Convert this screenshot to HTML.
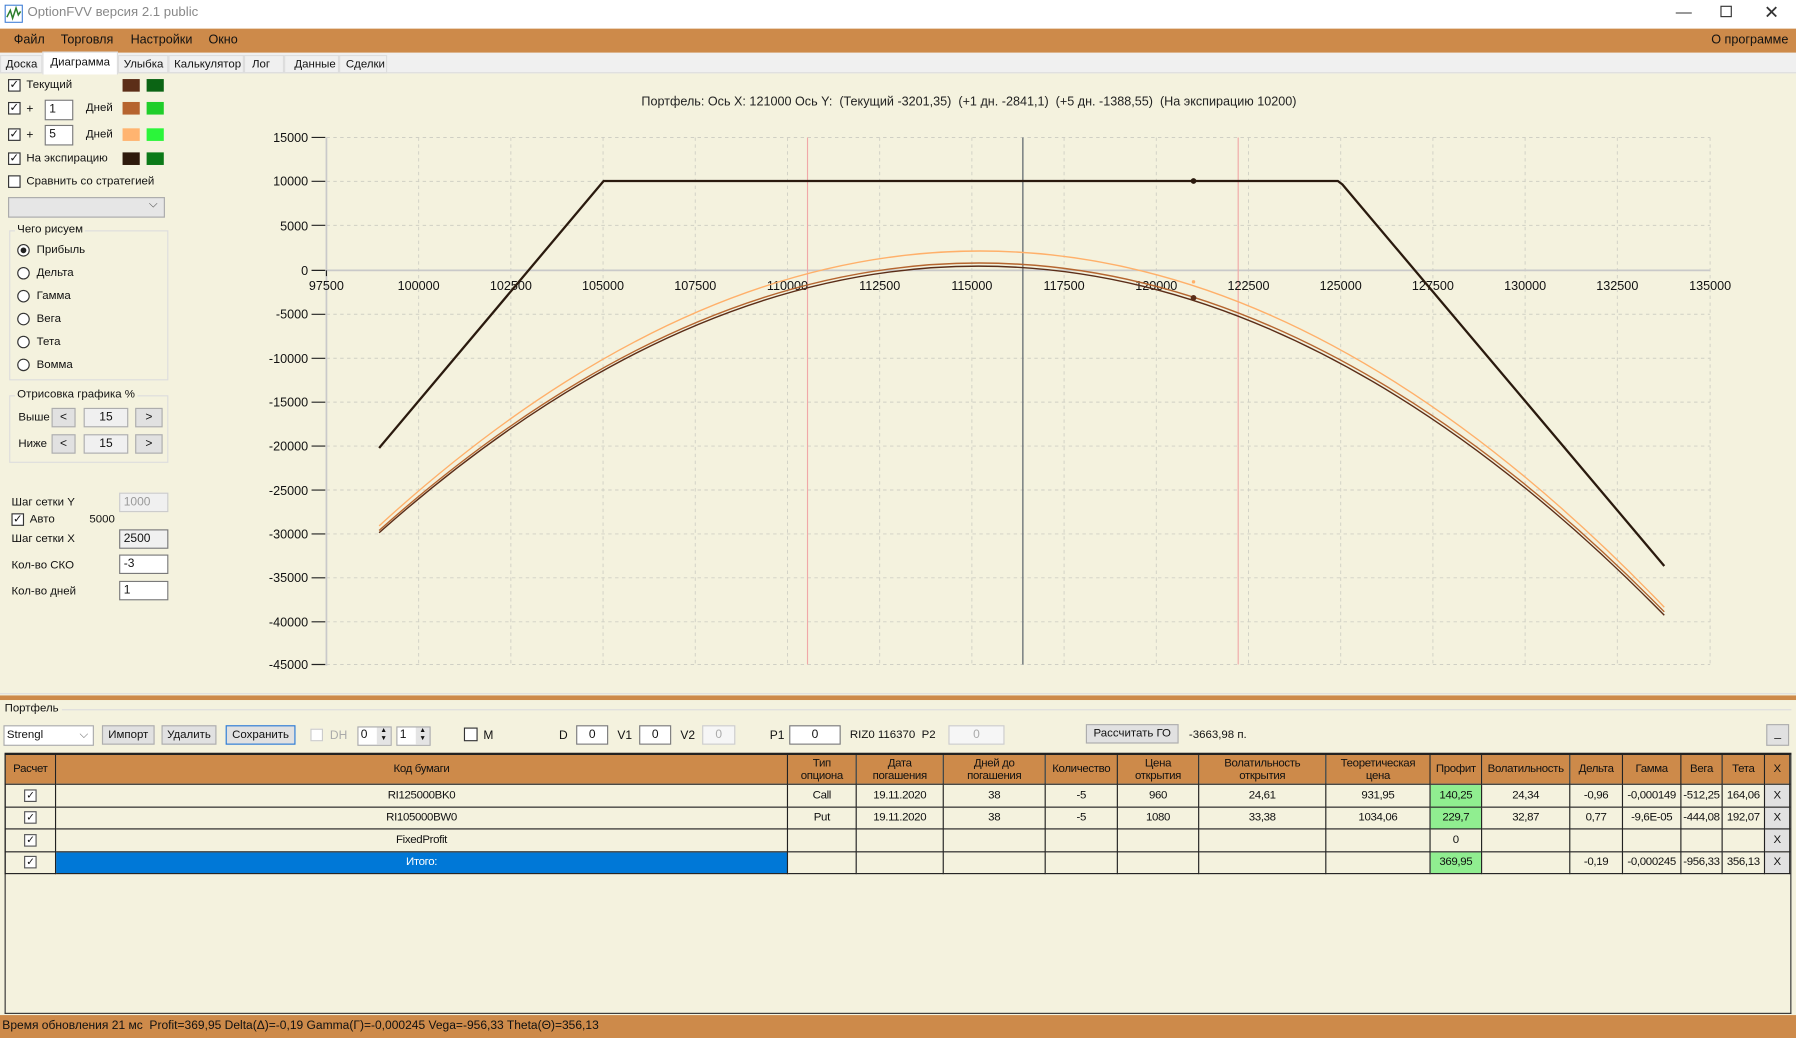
<!DOCTYPE html>
<html><head><meta charset="utf-8"><style>
*{margin:0;padding:0;box-sizing:border-box}
html,body{width:1796px;height:1038px;overflow:hidden;background:#f4f2de}
#w{position:absolute;left:0;top:0;width:1568px;height:906px;transform-origin:0 0;transform:scale(1.14541,1.1457);font-family:"Liberation Sans","DejaVu Sans",sans-serif;font-size:10.5px;color:#111;background:#f4f2de}
.a{position:absolute;white-space:nowrap}
.cb{position:absolute;width:11px;height:11px;border:1px solid #333;background:#fff;font-size:10px;line-height:9px;text-align:center}
.in{position:absolute;background:#fff;border:1px solid #7a7a7a;height:17px;line-height:15px;padding-left:3px}
.rd{position:absolute;width:11px;height:11px;border:1px solid #333;border-radius:50%;background:#fff}
.btn{position:absolute;background:#e1e1e1;border:1px solid #adadad;text-align:center;line-height:15px;height:17px}
.sw{position:absolute;width:15px;height:11px}
table{border-collapse:collapse;table-layout:fixed;position:absolute;left:4px;top:658px;font-size:10px;letter-spacing:-.3px}
td,th{border:1px solid #222;text-align:center;overflow:hidden;white-space:nowrap;height:19.5px;font-weight:normal}
th{background:#cd8a4a;height:26px;line-height:11px}
.ck{display:inline-block;width:11px;height:11px;border:1px solid #555;background:#fff;font-size:9px;line-height:9px;vertical-align:middle}
</style></head><body><div id="w">
<div class="a" style="left:0;top:0;width:1568px;height:25px;background:#fff"></div>
<svg class="a" style="left:4px;top:4px" width="16" height="16"><rect x="0.5" y="0.5" width="15" height="15" fill="#fff" stroke="#3a7bd5"/><path d="M2 11 L5 5 L7 12 L10 3 L12 9 L14 6" stroke="#2b7d2b" fill="none" stroke-width="1.3"/></svg>
<div class="a" style="left:24px;top:5px;color:#888;font-size:11.5px">OptionFVV версия 2.1 public</div>
<div class="a" style="left:1463px;top:2px;font-size:14px;color:#333">—</div>
<div class="a" style="left:1502px;top:5px;width:10px;height:10px;border:1px solid #333"></div>
<div class="a" style="left:1540px;top:1px;font-size:16px;color:#333">✕</div>
<div class="a" style="left:0;top:25px;width:1568px;height:21px;background:#cd8a4a"></div>
<div class="a" style="left:12px;top:29px;font-size:11px">Файл</div>
<div class="a" style="left:53px;top:29px;font-size:11px">Торговля</div>
<div class="a" style="left:114px;top:29px;font-size:11px">Настройки</div>
<div class="a" style="left:182px;top:29px;font-size:11px">Окно</div>
<div class="a" style="left:1494px;top:29px;font-size:11px">О программе</div>
<div class="a" style="left:0;top:46px;width:1568px;height:18px;background:#f0f0f0;border-bottom:1px solid #ddd"></div>
<div class="a" style="left:0;top:48px;width:37px;height:16px;border:1px solid #ddd;padding:2px 0 0 4px;font-size:10px">Доска</div>
<div class="a" style="left:37px;top:45px;width:66px;height:20px;background:#fff;border:1px solid #ddd;border-bottom:none;padding:3px 0 0 6px;font-size:10px">Диаграмма</div>
<div class="a" style="left:103px;top:48px;width:44px;height:16px;border:1px solid #ddd;padding:2px 0 0 4px;font-size:10px">Улыбка</div>
<div class="a" style="left:147px;top:48px;width:66px;height:16px;border:1px solid #ddd;padding:2px 0 0 4px;font-size:10px">Калькулятор</div>
<div class="a" style="left:213px;top:48px;width:35px;height:16px;border:1px solid #ddd;padding:2px 0 0 6px;font-size:10px">Лог</div>
<div class="a" style="left:248px;top:48px;width:48px;height:16px;border:1px solid #ddd;padding:2px 0 0 8px;font-size:10px">Данные</div>
<div class="a" style="left:296px;top:48px;width:42px;height:16px;border:1px solid #ddd;padding:2px 0 0 5px;font-size:10px">Сделки</div>
<div class="cb" style="left:7px;top:69px">✓</div><div class="a" style="left:23px;top:69px;font-size:10px">Текущий</div>
<div class="sw" style="left:107px;top:69px;background:#5c2e18"></div><div class="sw" style="left:128px;top:69px;background:#0b6414"></div>
<div class="cb" style="left:7px;top:89px">✓</div><div class="a" style="left:23px;top:89px">+</div>
<div class="in" style="left:39px;top:87px;width:25px;height:18px">1</div><div class="a" style="left:75px;top:89px;font-size:10px">Дней</div>
<div class="sw" style="left:107px;top:89px;background:#b6642f"></div><div class="sw" style="left:128px;top:89px;background:#1fce2a"></div>
<div class="cb" style="left:7px;top:112px">✓</div><div class="a" style="left:23px;top:112px">+</div>
<div class="in" style="left:39px;top:109px;width:25px;height:18px">5</div><div class="a" style="left:75px;top:112px;font-size:10px">Дней</div>
<div class="sw" style="left:107px;top:112px;background:#ffb470"></div><div class="sw" style="left:128px;top:112px;background:#2bf53a"></div>
<div class="cb" style="left:7px;top:133px">✓</div><div class="a" style="left:23px;top:133px;font-size:10px">На экспирацию</div>
<div class="sw" style="left:107px;top:133px;background:#2e1a0c"></div><div class="sw" style="left:128px;top:133px;background:#0b7a18"></div>
<div class="cb" style="left:7px;top:153px"></div><div class="a" style="left:23px;top:153px;font-size:10px">Сравнить со стратегией</div>
<div class="a" style="left:7px;top:172px;width:137px;height:18px;background:#e6e6e6;border:1px solid #aaa"></div>
<div class="a" style="left:130px;top:173px;font-size:10px;color:#555">⌵</div>
<div class="a" style="left:8px;top:201px;width:139px;height:131px;border:1px solid #ddd"></div>
<div class="a" style="left:13px;top:195px;background:#f4f2de;padding:0 2px;font-size:10px">Чего рисуем</div>
<div class="rd" style="left:15px;top:213px"><div style="width:5px;height:5px;border-radius:50%;background:#222;margin:2px"></div></div><div class="a" style="left:32px;top:213px;font-size:10px">Прибыль</div>
<div class="rd" style="left:15px;top:233px"></div><div class="a" style="left:32px;top:233px;font-size:10px">Дельта</div>
<div class="rd" style="left:15px;top:253px"></div><div class="a" style="left:32px;top:253px;font-size:10px">Гамма</div>
<div class="rd" style="left:15px;top:273px"></div><div class="a" style="left:32px;top:273px;font-size:10px">Вега</div>
<div class="rd" style="left:15px;top:293px"></div><div class="a" style="left:32px;top:293px;font-size:10px">Тета</div>
<div class="rd" style="left:15px;top:313px"></div><div class="a" style="left:32px;top:313px;font-size:10px">Вомма</div>
<div class="a" style="left:8px;top:345px;width:139px;height:59px;border:1px solid #ddd"></div>
<div class="a" style="left:13px;top:339px;background:#f4f2de;padding:0 2px;font-size:10px">Отрисовка графика %</div>
<div class="a" style="left:16px;top:359px;font-size:10px">Выше</div>
<div class="btn" style="left:45px;top:356px;width:21px">&lt;</div><div class="btn" style="left:73px;top:356px;width:39px;background:#f0f0f0">15</div><div class="btn" style="left:118px;top:356px;width:24px">&gt;</div>
<div class="a" style="left:16px;top:382px;font-size:10px">Ниже</div>
<div class="btn" style="left:45px;top:379px;width:21px">&lt;</div><div class="btn" style="left:73px;top:379px;width:39px;background:#f0f0f0">15</div><div class="btn" style="left:118px;top:379px;width:24px">&gt;</div>
<div class="a" style="left:10px;top:433px;font-size:10px">Шаг сетки Y</div><div class="in" style="left:104px;top:430px;width:43px;background:#f0f0f0;color:#999;border-color:#ccc">1000</div>
<div class="cb" style="left:10px;top:448px">✓</div><div class="a" style="left:26px;top:448px;font-size:10px">Авто</div><div class="a" style="left:78px;top:448px;font-size:10px">5000</div>
<div class="a" style="left:10px;top:465px;font-size:10px">Шаг сетки X</div><div class="in" style="left:104px;top:462px;width:43px;background:#f0f0f0">2500</div>
<div class="a" style="left:10px;top:488px;font-size:10px">Кол-во СКО</div><div class="in" style="left:104px;top:484px;width:43px">-3</div>
<div class="a" style="left:10px;top:511px;font-size:10px">Кол-во дней</div><div class="in" style="left:104px;top:507px;width:43px">1</div>
<div class="a" style="left:560px;top:83px;font-size:11px;color:#222">Портфель: Ось X: 121000 Ось Y:&nbsp; (Текущий -3201,35)&nbsp; (+1 дн. -2841,1)&nbsp; (+5 дн. -1388,55)&nbsp; (На экспирацию 10200)</div>
<svg class="a" style="left:0;top:0" width="1568" height="610" font-family="Liberation Sans, sans-serif" font-size="11">
<g stroke="#cfcfc4" stroke-dasharray="3,3" stroke-width="0.8">
<path d="M285 120H1493M285 158.3H1493M285 196.7H1493M285 274.3H1493M285 312.7H1493M285 351H1493M285 389.3H1493M285 427.7H1493M285 466H1493M285 504.3H1493M285 542.7H1493M285 580H1493"/>
<path d="M365.5 120V580M446 120V580M526.5 120V580M607 120V580M687.5 120V580M768 120V580M848.5 120V580M929 120V580M1009.5 120V580M1090 120V580M1170.5 120V580M1251 120V580M1331.5 120V580M1412 120V580M1493 120V580"/>
</g>
<path d="M285 236H1493" stroke="#c9c9c9" stroke-width="1.5"/>
<path d="M285 120V581" stroke="#c9c9c9" stroke-width="1.5"/>
<path d="M705 120V580M1081 120V580" stroke="#f0a8a8" stroke-width="1"/>
<path d="M893 120V580" stroke="#6c7378" stroke-width="1.2"/>
<g stroke="#222" stroke-width="1"><path d="M272 120H284M272 158.3H284M272 196.7H284M272 236H284M272 274.3H284M272 312.7H284M272 351H284M272 389.3H284M272 427.7H284M272 466H284M272 504.3H284M272 542.7H284M272 580H284M285 236V241"/></g>
<g text-anchor="end" fill="#111"><text x="269" y="124">15000</text><text x="269" y="162">10000</text><text x="269" y="201">5000</text><text x="269" y="240">0</text><text x="269" y="278">-5000</text><text x="269" y="317">-10000</text><text x="269" y="355">-15000</text><text x="269" y="393">-20000</text><text x="269" y="432">-25000</text><text x="269" y="470">-30000</text><text x="269" y="508">-35000</text><text x="269" y="547">-40000</text><text x="269" y="584">-45000</text></g>
<g text-anchor="middle" fill="#111"><text x="285" y="253">97500</text><text x="365.5" y="253">100000</text><text x="446" y="253">102500</text><text x="526.5" y="253">105000</text><text x="607" y="253">107500</text><text x="687.5" y="253">110000</text><text x="768" y="253">112500</text><text x="848.5" y="253">115000</text><text x="929" y="253">117500</text><text x="1009.5" y="253">120000</text><text x="1090" y="253">122500</text><text x="1170.5" y="253">125000</text><text x="1251" y="253">127500</text><text x="1331.5" y="253">130000</text><text x="1412" y="253">132500</text><text x="1493" y="253">135000</text></g>
<path d="M331 459 Q892 -54 1453 530" stroke="#ffb06a" fill="none" stroke-width="1.2"/>
<path d="M331 463 Q892 -37 1453 534" stroke="#b5652f" fill="none" stroke-width="1.2"/>
<path d="M331 465 Q892 -34 1453 537" stroke="#5a2d18" fill="none" stroke-width="1.2"/>
<path d="M331 391 L527 158 L1168 158 L1172 161 L1453 494" stroke="#2a1a0e" fill="none" stroke-width="2"/>
<circle cx="1042" cy="158" r="2.5" fill="#2a1a0e"/><circle cx="1042" cy="260" r="2.5" fill="#5a2d18"/><circle cx="1042" cy="246" r="1.5" fill="#ffb06a"/>
</svg>
<div class="a" style="left:0;top:607px;width:1568px;height:4px;background:#cd8a4a"></div>
<div class="a" style="left:0;top:605px;width:1568px;height:1px;background:#ddd"></div>
<div class="a" style="left:4px;top:613px;font-size:10px">Портфель</div>
<div class="a" style="left:54px;top:619px;width:1510px;height:1px;background:#ddd"></div>
<div class="a" style="left:3px;top:633px;width:79px;height:18px;background:#fff;border:1px solid #aaa;padding:2px 0 0 2px;font-size:10px">Strengl<span style="position:absolute;right:4px;color:#777">⌵</span></div>
<div class="btn" style="left:89px;top:633px;width:46px;font-size:10px">Импорт</div>
<div class="btn" style="left:141px;top:633px;width:48px;font-size:10px">Удалить</div>
<div class="btn" style="left:197px;top:633px;width:61px;border:1.5px solid #2a7ad5;font-size:10px">Сохранить</div>
<div class="a" style="left:271px;top:636px;width:11px;height:11px;border:1px solid #ccc;background:#fff"></div><div class="a" style="left:288px;top:636px;color:#aaa">DH</div>
<div class="a" style="left:312px;top:634px;width:30px;height:17px;background:#fff;border:1px solid #aaa;padding-left:2px">0</div><div class="a" style="left:329px;top:635px;width:12px;height:15px;background:#e4e4e4;font-size:6px;line-height:7px;text-align:center">▲<br>▼</div>
<div class="a" style="left:346px;top:634px;width:30px;height:17px;background:#fff;border:1px solid #aaa;padding-left:2px">1</div><div class="a" style="left:363px;top:635px;width:12px;height:15px;background:#e4e4e4;font-size:6px;line-height:7px;text-align:center">▲<br>▼</div>
<div class="a" style="left:405px;top:635px;width:12px;height:12px;border:1px solid #333;background:#fff"></div><div class="a" style="left:422px;top:636px">M</div>
<div class="a" style="left:488px;top:636px">D</div><div class="in" style="left:503px;top:633px;width:28px;text-align:center;padding:0">0</div>
<div class="a" style="left:539px;top:636px">V1</div><div class="in" style="left:558px;top:633px;width:28px;text-align:center;padding:0">0</div>
<div class="a" style="left:594px;top:636px">V2</div><div class="in" style="left:613px;top:633px;width:29px;text-align:center;padding:0;color:#aaa;border-color:#ccc;background:#f6f6f6">0</div>
<div class="a" style="left:672px;top:636px">P1</div><div class="in" style="left:689px;top:633px;width:45px;text-align:center;padding:0">0</div>
<div class="a" style="left:742px;top:636px;font-size:10px">RIZ0 116370&nbsp; P2</div><div class="in" style="left:828px;top:633px;width:49px;text-align:center;padding:0;color:#aaa;border-color:#ccc;background:#f6f6f6">0</div>
<div class="btn" style="left:948px;top:632px;width:81px;font-size:10px">Рассчитать ГО</div>
<div class="a" style="left:1038px;top:636px;font-size:10px">-3663,98 п.</div>
<div class="btn" style="left:1542px;top:632px;width:20px;height:19px">_</div>
<div class="a" style="left:4px;top:657px;width:1560px;height:228px;border:1px solid #333;border-top:2px solid #222"></div>
<table>
<colgroup><col style="width:44px"><col style="width:639px"><col style="width:60px"><col style="width:76px"><col style="width:89px"><col style="width:63px"><col style="width:71px"><col style="width:111px"><col style="width:91px"><col style="width:45px"><col style="width:77px"><col style="width:46px"><col style="width:51px"><col style="width:36px"><col style="width:37px"><col style="width:22px"></colgroup>
<tr><th>Расчет</th><th>Код бумаги</th><th>Тип<br>опциона</th><th>Дата<br>погашения</th><th>Дней до<br>погашения</th><th>Количество</th><th>Цена<br>открытия</th><th>Волатильность<br>открытия</th><th>Теоретическая<br>цена</th><th>Профит</th><th>Волатильность</th><th>Дельта</th><th>Гамма</th><th>Вега</th><th>Тета</th><th>X</th></tr>
<tr><td><span class="ck">✓</span></td><td>RI125000BK0</td><td>Call</td><td>19.11.2020</td><td>38</td><td>-5</td><td>960</td><td>24,61</td><td>931,95</td><td style="background:#90ee90">140,25</td><td>24,34</td><td>-0,96</td><td>-0,000149</td><td>-512,25</td><td>164,06</td><td style="background:#e1e1e1">X</td></tr>
<tr><td><span class="ck">✓</span></td><td>RI105000BW0</td><td>Put</td><td>19.11.2020</td><td>38</td><td>-5</td><td>1080</td><td>33,38</td><td>1034,06</td><td style="background:#90ee90">229,7</td><td>32,87</td><td>0,77</td><td>-9,6E-05</td><td>-444,08</td><td>192,07</td><td style="background:#e1e1e1">X</td></tr>
<tr><td><span class="ck">✓</span></td><td>FixedProfit</td><td></td><td></td><td></td><td></td><td></td><td></td><td></td><td>0</td><td></td><td></td><td></td><td></td><td></td><td style="background:#e1e1e1">X</td></tr>
<tr><td><span class="ck">✓</span></td><td style="background:#0078d7;color:#fff">Итого:</td><td></td><td></td><td></td><td></td><td></td><td></td><td></td><td style="background:#90ee90">369,95</td><td></td><td>-0,19</td><td>-0,000245</td><td>-956,33</td><td>356,13</td><td style="background:#e1e1e1">X</td></tr>
</table>
<div class="a" style="left:0;top:886px;width:1568px;height:20px;background:#cd8a4a;padding:3px 0 0 2px;font-size:10.5px">Время обновления 21 мс&nbsp; Profit=369,95 Delta(Δ)=-0,19 Gamma(Γ)=-0,000245 Vega=-956,33 Theta(Θ)=356,13</div>
</div></body></html>
